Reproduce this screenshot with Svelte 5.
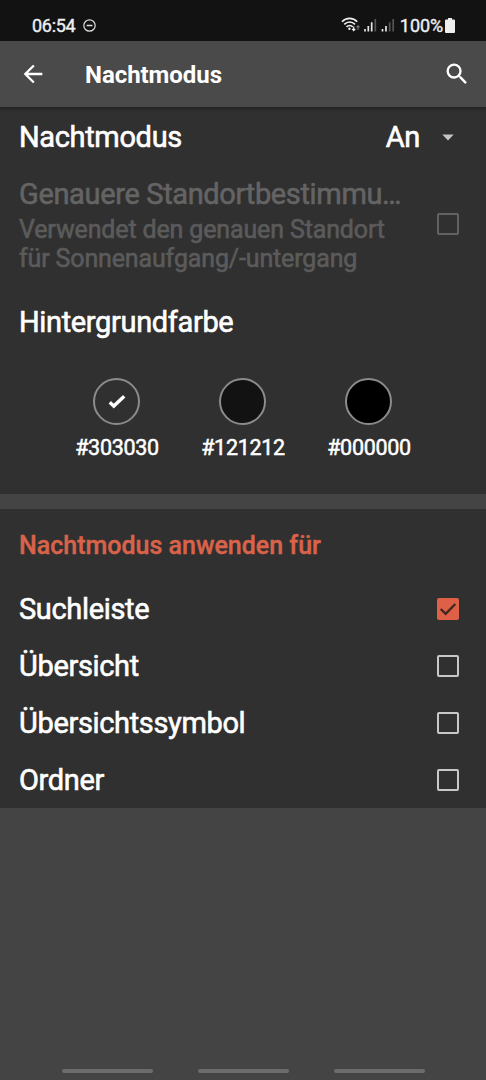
<script>
    let mode = "An";
    let background = "#303030";

    const colors = ["#303030", "#121212", "#000000"];

    let targets = [
        { name: "Suchleiste", checked: true },
        { name: "Übersicht", checked: false },
        { name: "Übersichtssymbol", checked: false },
        { name: "Ordner", checked: false },
    ];

    function toggle(i) {
        targets[i].checked = !targets[i].checked;
    }
</script>

<div class="screen">
    <!-- STATUS BAR -->
    <div class="status">
        <span class="time">06:54</span>
        <svg class="dnd" width="13" height="13" viewBox="0 0 13 13">
            <circle cx="6.5" cy="6.5" r="5.7" fill="none" stroke="#ddd" stroke-width="1.2" />
            <path d="M3.6 6.5h5.8" stroke="#ddd" stroke-width="1.5" />
        </svg>
        <svg class="signal" width="56" height="18" viewBox="0 0 56 18" fill="none">
            <g stroke="#eee" stroke-width="1.6">
                <path d="M1 5.7C5.2 1.3 12 1.3 16.2 5.7" />
                <path d="M3.3 8.4C6.3 5.2 11 5.2 14 8.4" />
                <path d="M5.5 10.9C7.3 9 10 9 11.7 10.9" />
            </g>
            <circle cx="8.4" cy="12.8" r="1.2" fill="#eee" />
            <path d="M12.7 10.5v3.7M11.1 12.8l1.6 1.7 1.6-1.7" stroke="#eee" stroke-width="1.2" />
            <path d="M17 14v-4M15.4 11.4l1.6-1.7 1.6 1.7" stroke="#777" stroke-width="1.1" />
            <path d="M24 13v2.5M27.3 10v5.5M30.7 6.3v9.2" stroke="#e6e6e6" stroke-width="1.7" />
            <path d="M34.3 3v12.5" stroke="#555" stroke-width="1.7" />
            <path d="M41.5 13v2.5M45 10v5.5" stroke="#e6e6e6" stroke-width="1.7" />
            <path d="M48.7 6.3v9.2M52.2 3v12.5" stroke="#555" stroke-width="1.7" />
        </svg>
        <span class="percent">100%</span>
        <svg width="10" height="15" viewBox="0 0 10 15">
            <path d="M3 0h4v1.600h2a1 1 0 0 1 1 1V14a1 1 0 0 1-1 1H1a1 1 0 0 1-1-1V2.600a1 1 0 0 1 1-1h2z" fill="#eee" />
        </svg>
    </div>

    <!-- APP BAR -->
    <header>
        <svg width="28" height="28" viewBox="0 0 24 24">
            <path d="M20 11H7.830l5.590-5.590L12 4l-8 8 8 8 1.410-1.410L7.830 13H20z" fill="#fff" />
        </svg>
        <h1>Nachtmodus</h1>
        <svg class="search" width="28" height="28" viewBox="0 0 24 24">
            <path d="M15.500 14h-.79l-.28-.27A6.470 6.470 0 0 0 16 9.500 6.500 6.500 0 1 0 9.500 16c1.610 0 3.090-.59 4.230-1.570l.27.28v.79l5 4.990L20.490 19zm-6 0a4.500 4.500 0 1 1 0-9 4.500 4.500 0 0 1 0 9z" fill="#fff" />
        </svg>
    </header>

    <section class="mode">
        <div class="row mode-row">
            <span class="label">Nachtmodus</span>
            <span class="value">{mode}</span>
            <svg class="arrow" width="12" height="7" viewBox="0 0 12 7">
                <path d="M.3.400h11.400L6 6.400z" fill="#c4c4c4" />
            </svg>
        </div>

        <div class="location">
            <div class="location-text">
                <div class="label">Genauere Standortbestimmu…</div>
                <div class="desc">Verwendet den genauen Standort<br>für Sonnenaufgang/-untergang</div>
            </div>
            <span class="box disabled"></span>
        </div>

        <div class="label heading">Hintergrundfarbe</div>

        <div class="swatches">
            {#each colors as color}
                <div class="swatch" on:click={() => (background = color)}>
                    <div class="dot" style="background: {color}">
                        {#if color === background}
                            <svg width="18" height="15" viewBox="0 0 18 15">
                                <path d="M1.800 8.200l4 3.900L16.200 2.200" fill="none" stroke="#fff" stroke-width="3.400" />
                            </svg>
                        {/if}
                    </div>
                    <span>{color}</span>
                </div>
            {/each}
        </div>
    </section>

    <section class="apply">
        <h2>Nachtmodus anwenden für</h2>
        {#each targets as target, i}
            <div class="row" on:click={() => toggle(i)}>
                <span class="label">{target.name}</span>
                <span class="box" class:checked={target.checked}>
                    {#if target.checked}
                        <svg width="22" height="22" viewBox="0 0 22 22">
                            <path d="M3.700 11l5 4.800L18.300 6" fill="none" stroke="#412823" stroke-width="2.400" />
                        </svg>
                    {/if}
                </span>
            </div>
        {/each}
    </section>

    <nav>
        <i></i>
        <i></i>
        <i></i>
    </nav>
</div>

<style>
:global(body) {
    margin: 0;
    background: #444;
}

.screen {
    display: flex;
    flex-direction: column;
    width: 486px;
    height: 1080px;
    background: #444;
    color: #fff;
    font-family: Roboto, sans-serif;
    overflow: hidden;
}

.status {
    display: flex;
    align-items: center;
    height: 41px;
    padding: 9px 31px 0 32px;
    box-sizing: border-box;
    background: #121212;
    color: #eee;
    font-size: 18px;
    letter-spacing: -0.3px;
    -webkit-text-stroke: 0.4px;
}

.dnd {
    margin-left: 8px;
}

.signal {
    margin-left: auto;
}

.percent {
    margin: 0 2px 0 3px;
    letter-spacing: -0.1px;
}

header {
    display: flex;
    align-items: center;
    height: 66px;
    padding: 0 15px 0 19px;
    box-sizing: border-box;
    background: #4a4a4a;
}

h1 {
    margin: 2px 0 0 38px;
    font-size: 24px;
    font-weight: 700;
    letter-spacing: -0.05px;
}

.search {
    margin: -1px 0 0 auto;
}

section {
    background: #303030;
}

.mode {
    height: 387px;
    background: linear-gradient(#242424, #303030 5px);
}

.apply {
    height: 299px;
    margin-top: 15px;
}

.label,
.value {
    font-size: 29px;
    line-height: 34px;
    letter-spacing: -0.35px;
    -webkit-text-stroke: 0.6px;
}

.row {
    display: flex;
    align-items: center;
    height: 57px;
    padding: 0 27px 0 19px;
}

.row .label {
    flex: 1;
}

.mode-row {
    height: 60px;
    padding-right: 32px;
}

.arrow {
    margin-left: 22px;
}

.location {
    display: flex;
    align-items: center;
    height: 116px;
    padding: 0 27px 0 19px;
    color: #646464;
}

.location-text {
    margin-right: auto;
    white-space: nowrap;
}

.location .box {
    margin-top: -2px;
}

.desc {
    margin-top: 4px;
    color: #5b5b5b;
    font-size: 25px;
    line-height: 29px;
    letter-spacing: -0.14px;
    -webkit-text-stroke: 0.6px;
}

.heading {
    margin: 22px 0 0 19px;
}

.swatches {
    display: flex;
    justify-content: center;
}

.swatches {
    margin-top: 39px;
}

.swatch {
    display: flex;
    flex-direction: column;
    align-items: center;
    width: 126px;
    font-size: 21.5px;
    line-height: 26px;
    letter-spacing: -0.3px;
    -webkit-text-stroke: 0.5px;
}

.dot {
    display: flex;
    align-items: center;
    justify-content: center;
    width: 47px;
    height: 47px;
    margin: 0 1px 10px 0;
    box-sizing: border-box;
    border: 2px solid #8b8b8b;
    border-radius: 50%;
}

h2 {
    margin: 0;
    padding: 22px 0 20px 19px;
    color: #d9634a;
    font-size: 25px;
    font-weight: 500;
    line-height: 29px;
    -webkit-text-stroke: 0.4px;
}

.box {
    width: 22px;
    height: 22px;
    box-sizing: border-box;
    border: 2px solid #c8c8c8;
    border-radius: 2px;
}

.box.disabled {
    border-color: #616161;
}

.box.checked {
    border: 0;
    background: #de6046;
}

.box svg {
    display: block;
}

nav {
    display: flex;
    justify-content: center;
    gap: 45px;
    margin: auto 0 0;
    padding-bottom: 7px;
}

nav i {
    width: 91px;
    height: 4px;
    border-radius: 2px;
    background: #6c6c6c;
}
</style>
